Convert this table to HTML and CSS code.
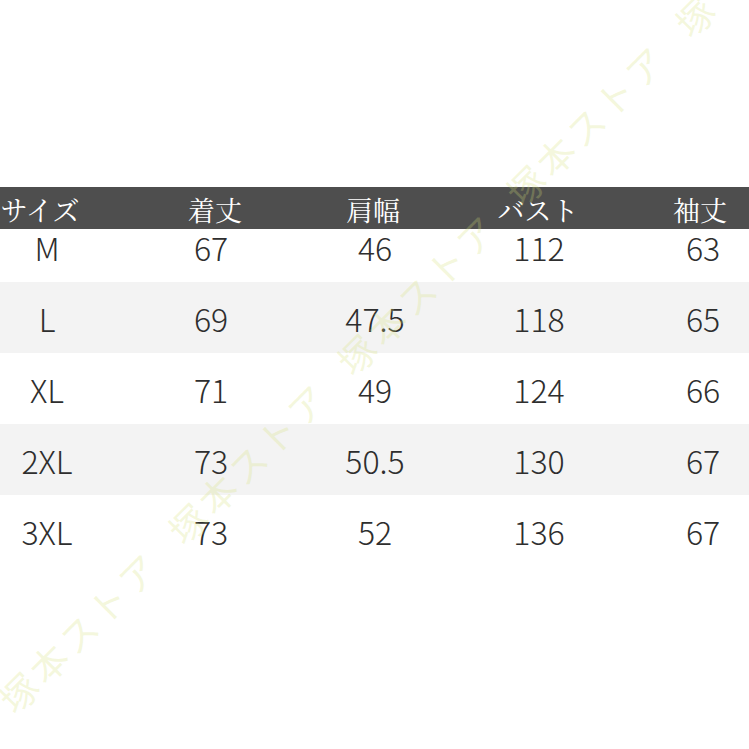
FILE: index.html
```html
<!DOCTYPE html>
<html lang="ja">
<head>
<meta charset="utf-8">
<title>サイズ表</title>
<link rel="stylesheet" href="styles.css">
</head>
<body>
<div class="page">
  <div class="table">
    <div class="row head">
      <div class="cell h1">サイズ</div>
      <div class="cell h2">着丈</div>
      <div class="cell h3">肩幅</div>
      <div class="cell h4">バスト</div>
      <div class="cell h5">袖丈</div>
    </div>
    <div class="row first">
      <div class="cell">M</div><div class="cell">67</div><div class="cell">46</div><div class="cell">112</div><div class="cell">63</div>
    </div>
    <div class="row shade">
      <div class="cell">L</div><div class="cell">69</div><div class="cell">47.5</div><div class="cell">118</div><div class="cell">65</div>
    </div>
    <div class="row">
      <div class="cell">XL</div><div class="cell">71</div><div class="cell">49</div><div class="cell">124</div><div class="cell">66</div>
    </div>
    <div class="row shade">
      <div class="cell">2XL</div><div class="cell">73</div><div class="cell">50.5</div><div class="cell">130</div><div class="cell">67</div>
    </div>
    <div class="row">
      <div class="cell">3XL</div><div class="cell">73</div><div class="cell">52</div><div class="cell">136</div><div class="cell">67</div>
    </div>
  </div>
  <div class="watermark" aria-hidden="true">
    <span class="ch">塚</span><span class="ch">本</span><span class="ch">ス</span><span class="ch">ト</span><span class="ch">ア</span><span class="gap"></span><span class="ch">塚</span><span class="ch">本</span><span class="ch">ス</span><span class="ch">ト</span><span class="ch">ア</span><span class="gap"></span><span class="ch">塚</span><span class="ch">本</span><span class="ch">ス</span><span class="ch">ト</span><span class="ch">ア</span><span class="gap"></span><span class="ch">塚</span><span class="ch">本</span><span class="ch">ス</span><span class="ch">ト</span><span class="ch">ア</span><span class="gap"></span><span class="ch">塚</span>
  </div>
</div>
</body>
</html>
```
FILE: styles.css
```css
html, body {
  margin: 0;
  padding: 0;
  background: #ffffff;
}

.page {
  position: relative;
  width: 749px;
  height: 749px;
  overflow: hidden;
  background: #ffffff;
  font-family: "Noto Sans CJK JP", "Noto Sans", sans-serif;
}

.table {
  margin-top: 187px;
  margin-left: -35px;
  width: 820px;
}

.row {
  display: grid;
  grid-template-columns: repeat(5, 164px);
  height: 71px;
  align-items: center;
  color: #2e2e2e;
  font-size: 32px;
  font-weight: 300;
  line-height: 40px;
}

.row.shade {
  background: #f3f3f3;
}

.row.first {
  height: 53px;
  align-items: start;
  padding-top: 0;
  box-sizing: border-box;
}

.row.first .cell {
  line-height: 36px;
}

.row.head {
  height: 42px;
  background: #4e4e4e;
  color: #ffffff;
  font-family: "Noto Serif CJK JP", "Noto Sans CJK JP", serif;
  font-size: 27px;
  font-weight: 400;
  line-height: 42px;
}

.cell {
  text-align: center;
  white-space: nowrap;
}

.head .cell {
  padding-top: 4px;
  line-height: 38px;
}

.head .h1 { padding-right: 14px; }
.head .h2 { padding-left: 8px; }
.head .h3 { padding-right: 4px; }
.head .h4 { padding-right: 2px; }
.head .h5 { padding-right: 6px; }

.watermark {
  position: absolute;
  left: 356px;
  top: 354px;
  transform: translate(-50%, -50%) rotate(-45deg);
  white-space: nowrap;
  font-family: "Noto Sans CJK JP", sans-serif;
  font-size: 37px;
  line-height: 44px;
  color: rgba(214, 226, 120, 0.26);
  pointer-events: none;
  display: flex;
}

.watermark .ch {
  display: inline-block;
  width: 42px;
  text-align: center;
}

.watermark .gap {
  display: inline-block;
  width: 29px;
}
```
